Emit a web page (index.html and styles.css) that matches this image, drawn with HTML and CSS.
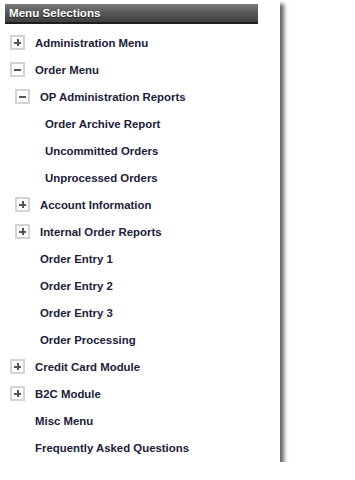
FILE: index.html
```html
<!DOCTYPE html>
<html lang="en">
<head>
    <meta charset="UTF-8">
    <title>Menu Selections</title>
    <link rel="stylesheet" href="styles.css">
</head>
<body>

<div class="menu-panel">
    <div class="menu-header">Menu Selections</div>
    <ul class="menu-tree">
        <li class="node lvl1"><span class="toggle plus"></span><span class="label">Administration Menu</span></li>
        <li class="node lvl1"><span class="toggle minus"></span><span class="label">Order Menu</span></li>
        <li class="node lvl2"><span class="toggle minus"></span><span class="label">OP Administration Reports</span></li>
        <li class="node lvl3 leaf"><span class="label">Order Archive Report</span></li>
        <li class="node lvl3 leaf"><span class="label">Uncommitted Orders</span></li>
        <li class="node lvl3 leaf"><span class="label">Unprocessed Orders</span></li>
        <li class="node lvl2"><span class="toggle plus"></span><span class="label">Account Information</span></li>
        <li class="node lvl2"><span class="toggle plus"></span><span class="label">Internal Order Reports</span></li>
        <li class="node lvl2 leaf"><span class="label">Order Entry 1</span></li>
        <li class="node lvl2 leaf"><span class="label">Order Entry 2</span></li>
        <li class="node lvl2 leaf"><span class="label">Order Entry 3</span></li>
        <li class="node lvl2 leaf"><span class="label">Order Processing</span></li>
        <li class="node lvl1"><span class="toggle plus"></span><span class="label">Credit Card Module</span></li>
        <li class="node lvl1"><span class="toggle plus"></span><span class="label">B2C Module</span></li>
        <li class="node lvl1 leaf"><span class="label">Misc Menu</span></li>
        <li class="node lvl1 leaf"><span class="label">Frequently Asked Questions</span></li>
    </ul>
</div>

</body>
</html>
```

FILE: styles.css
```css
body {
    margin: 0;
    background: #fff;
    font-family: "Liberation Sans", Arial, sans-serif;
}

.menu-panel {
    width: 280px;
    height: 462px;
    background: #fff;
    box-shadow: 4px 4px 4px rgba(0, 0, 0, 0.6);
    padding-top: 4px;
    box-sizing: border-box;
}

.menu-header {
    margin-left: 5px;
    width: 253px;
    height: 20px;
    box-sizing: border-box;
    padding-left: 4px;
    line-height: 18px;
    background: linear-gradient(#7a7a7a, #5a5a5a 45%, #404040);
    border-bottom: 2px solid #1e1e1e;
    color: #fff;
    font-weight: bold;
    font-size: 11.6px;
    text-shadow: 0 1px 1px rgba(0, 0, 0, 0.6);
}

.menu-tree {
    list-style: none;
    margin: 5px 0 0 0;
    padding: 0;
}

.node {
    height: 27px;
    display: flex;
    align-items: center;
    font-size: 11.4px;
    font-weight: bold;
    color: #20203a;
}

.lvl1 { padding-left: 10px; }
.lvl2 { padding-left: 15px; }
.lvl3 { padding-left: 45px; }

.lvl1.leaf { padding-left: 35px; }
.lvl2.leaf { padding-left: 40px; }

.toggle {
    width: 15px;
    height: 15px;
    box-sizing: border-box;
    border: 2px solid #d4d4d4;
    background: #fff;
    margin-right: 10px;
    position: relative;
    flex: none;
}

.toggle::before,
.toggle::after {
    content: "";
    position: absolute;
    background: #555;
}

.toggle::before {
    left: 2px;
    right: 2px;
    top: 5px;
    height: 1.5px;
}

.plus::after {
    top: 2px;
    bottom: 2px;
    left: 5px;
    width: 1.5px;
}
```
